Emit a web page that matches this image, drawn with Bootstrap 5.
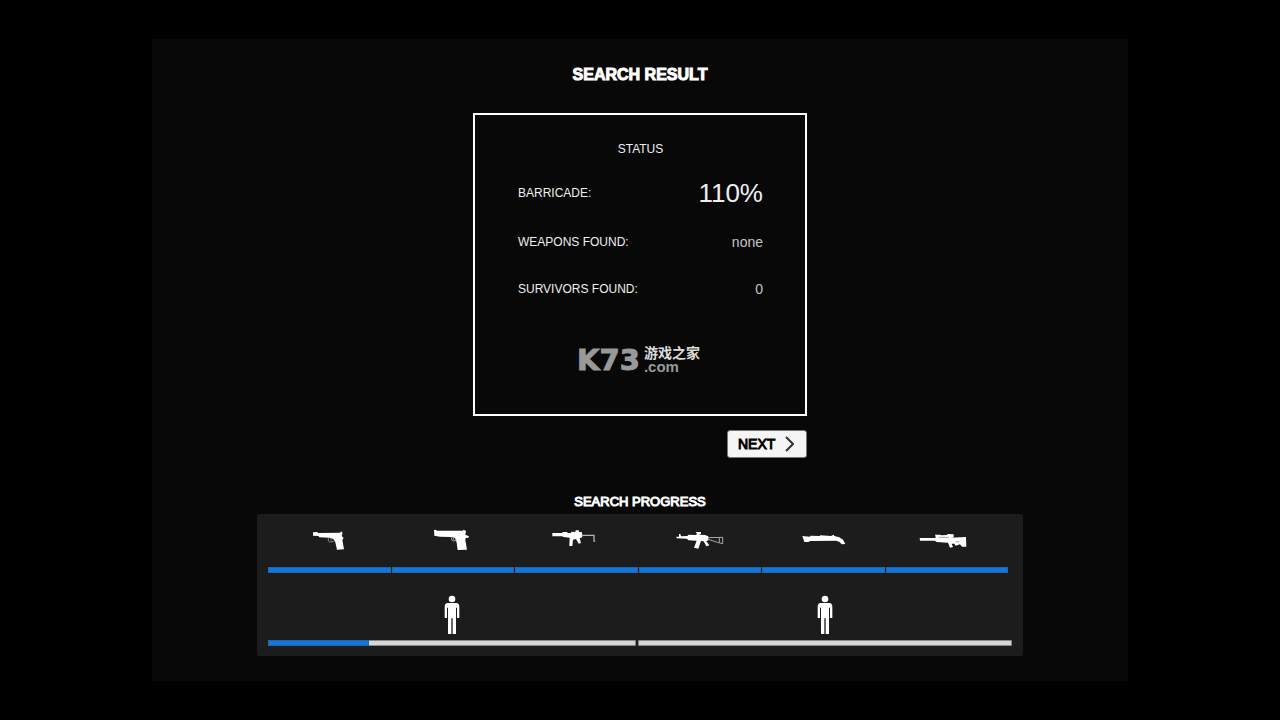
<!DOCTYPE html>
<html lang="en">
<head>
<meta charset="utf-8">
<meta name="viewport" content="width=device-width, initial-scale=1">
<title>Search Result</title>
<link href="https://cdn.jsdelivr.net/npm/bootstrap@5.3.0/dist/css/bootstrap.min.css" rel="stylesheet">
<style>
body { background: #000; color: #fff; font-family: "Liberation Sans", Arial, sans-serif; font-size: 12px; line-height: 18px; }
.screen { max-width: 976px; background: #080808; padding: 24px 16px 25px; }
.result { max-width: 334px; }
.heavy { -webkit-text-stroke: 1px currentColor; font-weight: 400; }
.title { font-size: 16px; line-height: 24px; margin-bottom: 26px; font-weight: 700; -webkit-text-stroke: 1px currentColor; }
.status-box { border: 2px solid #fff; padding: 25px 42px 40px 43px; }
.status-box h2 { font-size: 12px; line-height: 18px; font-weight: 400; margin-bottom: 17px; color: #eee; }
.stat { height: 20px; color: #eee; }
.stat dt { font-weight: 400; }
.stat dd { font-size: 14px; color: #c4c4c4; }
.stat.main { height: 36px; margin-bottom: 21px; }
.stat.main dd { font-size: 26px; color: #eee; }
.stat:last-child { margin-top: 27px; }
.stats { margin-bottom: 47px; }
.brand { height: 28px; color: #999; gap: 4px; }
.brand-name { font: bold 29px/28px "DejaVu Sans", sans-serif; -webkit-text-stroke: 1px #999; }
.brand-cn { font: bold 14px/14px "Liberation Sans", "Noto Sans CJK SC", sans-serif; color: #ddd; }
.brand-com { font-weight: bold; font-size: 15px; line-height: 14px; }
.next { height: 28px; width: 80px; margin-top: 14px; padding: 0 12px 0 10px; background: #f5f5f5; border: 1px solid #777; border-radius: 3px; color: #000; font-size: 14px; line-height: 20px; }
.next:hover { background: #fff; color: #000; }
.progress-title { font-size: 13px; line-height: 20px; margin: 34px 0 2px; }
.tracker { max-width: 766px; background: #1c1c1c; padding: 14px 11px 10px; border-radius: 2px; }
.weapons { display: grid; grid-template-columns: repeat(6, 1fr); column-gap: 1px; padding-right: 4px; margin-bottom: 22px; }
.weapons svg { margin-bottom: 15px; }
.survivors { display: grid; grid-template-columns: 368fr 373fr; column-gap: 2px; }
.survivors svg { margin-bottom: 5px; }
.tracker svg { fill: #fff; display: block; margin-left: auto; margin-right: auto; }
.tracker .progress { height: 6px; border-radius: 2px; background: #d6d6d6; box-shadow: inset 0 0 0 1px #888; }
.tracker .progress-bar { background: #1276e0; box-shadow: inset 0 0 0 1px #2463a4; }
</style>
</head>
<body>
<div class="min-vh-100 d-flex align-items-center justify-content-center">
<main class="screen w-100">
  <section class="result mx-auto">
    <h1 class="title text-center">SEARCH RESULT</h1>
    <div class="status-box">
      <h2 class="text-center">STATUS</h2>
      <dl class="stats">
        <div class="stat main d-flex justify-content-between align-items-center"><dt>BARRICADE:</dt><dd class="mb-0">110%</dd></div>
        <div class="stat d-flex justify-content-between align-items-center"><dt>WEAPONS FOUND:</dt><dd class="mb-0">none</dd></div>
        <div class="stat d-flex justify-content-between align-items-center"><dt>SURVIVORS FOUND:</dt><dd class="mb-0">0</dd></div>
      </dl>
      <div class="brand d-flex justify-content-center align-items-center me-1">
        <span class="brand-name">K73</span>
        <span class="d-flex flex-column"><span class="brand-cn">游戏之家</span><span class="brand-com">.com</span></span>
      </div>
    </div>
    <button type="button" class="next btn d-flex align-items-center justify-content-between ms-auto">
      <span class="heavy">NEXT</span>
      <svg width="9" height="16" viewBox="0 0 9 16" fill="none" stroke="#333" stroke-width="2" aria-hidden="true"><path d="M1 1l7 7-7 7"/></svg>
    </button>
  </section>
  <h2 class="progress-title heavy text-center">SEARCH PROGRESS</h2>
  <section class="tracker mx-auto">
    <div class="weapons">
      <div>
        <svg width="56" height="24" viewBox="33 39 168 72" role="img" aria-label="Pistol"><path d="M69 52L82 51 84 54 150 53 153 49 158 54 155 63 161 69 157 74 162 103 141 104 136 82 130 72 118 68 88 67 85 63 69 62Z"/><path d="M115 69v9q2 4 7 3l10-2M123 70v7" fill="none" stroke="#888" stroke-width="3"/></svg>
        <div class="progress" role="progressbar" aria-label="Pistol"><div class="progress-bar w-100"></div></div>
      </div>
      <div>
        <svg width="56" height="24" viewBox="405 39 168 72" role="img" aria-label="Heavy pistol"><path d="M432 45L438 44 440 47 518 47 521 44 528 48 526 59 537 64 535 68 527 69 526 75 531 104 503 105 500 83 495 69 483 66 450 65 433 62Z"/><path d="M484 67q0 11 7 11l9-2M491 68v6" fill="none" stroke="#aaa" stroke-width="3"/></svg>
        <div class="progress" role="progressbar" aria-label="Heavy pistol"><div class="progress-bar w-100"></div></div>
      </div>
      <div>
        <svg width="56" height="24" viewBox="55 41 168 72" role="img" aria-label="Submachine gun"><path d="M68 56L97 56 99 53 112 53 114 56 124 56 125 52 137 53 138 48 147 48 149 53 157 54 158 69 150 72 154 86 147 88 139 74 130 76 128 95 119 95 120 70 101 68 97 66 68 66Z"/><path d="M156 63h37v17l3 2" fill="none" stroke="#b5b5b5" stroke-width="4"/></svg>
        <div class="progress" role="progressbar" aria-label="Submachine gun"><div class="progress-bar w-100"></div></div>
      </div>
      <div>
        <svg width="56" height="24" viewBox="426 39 168 72" role="img" aria-label="Assault rifle"><path d="M439 65L447 65 447 57 451 57 453 64 472 63 476 59 498 60 501 56 497 51 513 51 513 56 507 59 525 60 535 64 535 76 529 79 538 91 529 94 521 79 513 78 505 101 492 98 500 77 475 76 471 71 440 70Z"/><path d="M534 68L578 67V86L562 82 535 73M568 69V82" fill="none" stroke="#aaa" stroke-width="3"/></svg>
        <div class="progress" role="progressbar" aria-label="Assault rifle"><div class="progress-bar w-100"></div></div>
      </div>
      <div>
        <svg width="56" height="24" viewBox="47 39 168 72" role="img" aria-label="Shotgun"><path d="M69 63L91 65 94 62 121 63 123 61 155 63 163 59 165 63 180 67 191 74 198 87 187 88 181 81 170 77 93 78 87 81 75 81Z"/></svg>
        <div class="progress" role="progressbar" aria-label="Shotgun"><div class="progress-bar w-100"></div></div>
      </div>
      <div>
        <svg width="56" height="24" viewBox="416 39 168 72" role="img" aria-label="Sniper rifle"><path d="M418 69L465 69 466 66 464 59 480 59 482 61 500 60 502 57 520 58 520 67 509 68 557 66 558 95 545 95 539 88 526 92 522 86 514 86 518 96 509 98 503 83 469 81 464 77 419 77Z"/><path d="M475 67h30M526 80h10" fill="none" stroke="#777" stroke-width="2"/></svg>
        <div class="progress" role="progressbar" aria-label="Sniper rifle"><div class="progress-bar w-100"></div></div>
      </div>
    </div>
    <div class="survivors">
      <div>
        <svg width="24" height="40" viewBox="62 30 72 120" role="img" aria-label="First survivor"><circle cx="98" cy="42" r="10"/><path d="M85 54H111Q120 55 120 65V99H113V68H110V147H100V100H96V147H86V68H83V99H76V65Q76 55 85 54Z"/></svg>
        <div class="progress" role="progressbar" aria-label="First survivor"><div class="progress-bar" style="width:27.5%"></div></div>
      </div>
      <div>
        <svg width="24" height="40" viewBox="62 30 72 120" role="img" aria-label="Second survivor"><circle cx="98" cy="42" r="10"/><path d="M85 54H111Q120 55 120 65V99H113V68H110V147H100V100H96V147H86V68H83V99H76V65Q76 55 85 54Z"/></svg>
        <div class="progress" role="progressbar" aria-label="Second survivor"><div class="progress-bar" style="width:0%"></div></div>
      </div>
    </div>
  </section>
</main>
</div>
<script src="https://cdn.jsdelivr.net/npm/bootstrap@5.3.0/dist/js/bootstrap.bundle.min.js"></script>
</body>
</html>
